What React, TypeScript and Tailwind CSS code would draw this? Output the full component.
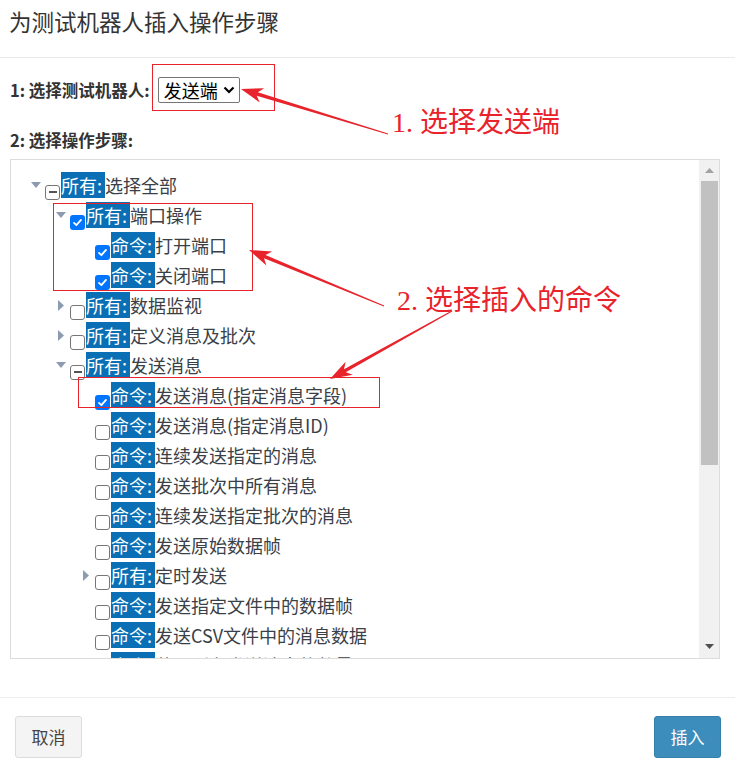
import React from "react";

type Check = "on" | "off" | "mixed";
type Row = { level: 0 | 1 | 2; toggle?: "down" | "right"; check: Check; tag: string; text: string };

const rows: Row[] = [
  { level: 0, toggle: "down", check: "mixed", tag: "所有:", text: "选择全部" },
  { level: 1, toggle: "down", check: "on", tag: "所有:", text: "端口操作" },
  { level: 2, check: "on", tag: "命令:", text: "打开端口" },
  { level: 2, check: "on", tag: "命令:", text: "关闭端口" },
  { level: 1, toggle: "right", check: "off", tag: "所有:", text: "数据监视" },
  { level: 1, toggle: "right", check: "off", tag: "所有:", text: "定义消息及批次" },
  { level: 1, toggle: "down", check: "mixed", tag: "所有:", text: "发送消息" },
  { level: 2, check: "on", tag: "命令:", text: "发送消息(指定消息字段)" },
  { level: 2, check: "off", tag: "命令:", text: "发送消息(指定消息ID)" },
  { level: 2, check: "off", tag: "命令:", text: "连续发送指定的消息" },
  { level: 2, check: "off", tag: "命令:", text: "发送批次中所有消息" },
  { level: 2, check: "off", tag: "命令:", text: "连续发送指定批次的消息" },
  { level: 2, check: "off", tag: "命令:", text: "发送原始数据帧" },
  { level: 2, toggle: "right", check: "off", tag: "所有:", text: "定时发送" },
  { level: 2, check: "off", tag: "命令:", text: "发送指定文件中的数据帧" },
  { level: 2, check: "off", tag: "命令:", text: "发送CSV文件中的消息数据" },
  { level: 2, check: "off", tag: "命令:", text: "获取所有发送消息的数量" },
];

const indent = ["pl-[15px]", "pl-[40px]", "pl-[65px]"];

function Box({ check }: { check: Check }) {
  if (check === "on") {
    return (
      <span className="flex h-[15px] w-[15px] shrink-0 translate-y-[7px] items-center justify-center rounded-[3px] bg-[#0075ff]">
        <svg width="11" height="11" viewBox="0 0 12 12">
          <path d="M2.2 6.4 L4.8 8.9 L9.8 3.2" fill="none" stroke="#fff" strokeWidth="2" strokeLinecap="round" strokeLinejoin="round" />
        </svg>
      </span>
    );
  }
  return (
    <span className="flex h-[15px] w-[15px] shrink-0 translate-y-[7px] items-center justify-center rounded-[3px] border-[1.5px] border-[#767676] bg-white">
      {check === "mixed" && <span className="h-[2px] w-[8px] bg-[#555]" />}
    </span>
  );
}

function Toggle({ dir }: { dir?: "down" | "right" }) {
  return (
    <span className="flex w-[19px] shrink-0 justify-center">
      {dir === "down" && (
        <svg width="10" height="6" viewBox="0 0 10 6">
          <path d="M0 0 H10 L5 6 Z" fill="#8d9bb0" />
        </svg>
      )}
      {dir === "right" && (
        <svg width="6" height="11" viewBox="0 0 6 11">
          <path d="M0 0 L6 5.5 L0 11 Z" fill="#8d9bb0" />
        </svg>
      )}
    </span>
  );
}

// tapered arrow from tail (tx,ty) to tip (px,py)
function arrow(tx: number, ty: number, px: number, py: number) {
  const dx = px - tx;
  const dy = py - ty;
  const len = Math.hypot(dx, dy);
  const ux = dx / len;
  const uy = dy / len;
  const nx = -uy;
  const ny = ux;
  const L = 22;
  const hw = 7.5;
  const bx = px - ux * L;
  const by = py - uy * L;
  const jx = px - ux * (L - 5);
  const jy = py - uy * (L - 5);
  const pts = [
    [tx + nx * 0.5, ty + ny * 0.5],
    [jx + nx * 1.8, jy + ny * 1.8],
    [bx + nx * hw, by + ny * hw],
    [px, py],
    [bx - nx * hw, by - ny * hw],
    [jx - nx * 1.8, jy - ny * 1.8],
    [tx - nx * 0.5, ty - ny * 0.5],
  ];
  return pts.map((p) => `${p[0].toFixed(1)},${p[1].toFixed(1)}`).join(" ");
}

export default function App() {
  return (
    <div className="relative h-[768px] w-full overflow-hidden bg-white font-['Noto_Sans_CJK_SC','Noto_Sans',sans-serif] text-[#333]">
      <div className="h-[58px] border-b border-[#e9e9e9] pl-[9px] pt-[5px]">
        <h1 className="text-[22.5px] leading-[32px] font-normal text-[#333]">为测试机器人插入操作步骤</h1>
      </div>

      <div className="px-[10px] pt-[19px] pr-[15px]">
        <div className="flex h-[26px] items-center">
          <span className="text-[16.5px] font-bold text-[#333]">1: 选择测试机器人:</span>
          <div className="ml-[8px] flex h-[26px] w-[82px] items-center justify-between rounded-[2px] border border-[#767676] bg-white pl-[5px] pr-[4px]">
            <span className="text-[18px] leading-none text-black">发送端</span>
            <svg width="12" height="8" viewBox="0 0 12 8">
              <path d="M1.5 1.5 L6 6 L10.5 1.5" fill="none" stroke="#000" strokeWidth="2.2" />
            </svg>
          </div>
        </div>

        <div className="mt-[26px] flex h-[22px] items-center">
          <span className="text-[16.5px] font-bold text-[#333]">2: 选择操作步骤:</span>
        </div>

        <div className="mt-[8px] flex h-[500px] border border-[#dcdcdc]">
          <div className="flex-1 overflow-hidden pt-[10px]">
            {rows.map((r, i) => (
              <div key={i} className={`flex h-[30px] items-center ${indent[r.level]}`}>
                <Toggle dir={r.toggle} />
                <Box check={r.check} />
                <span className="ml-[1px] whitespace-nowrap text-[18px] leading-[19px]">
                  <span className="bg-[#0a6fb4] pr-[3px] text-white">{r.tag}</span>
                  <span className="text-[#3a3f48]">{r.text}</span>
                </span>
              </div>
            ))}
          </div>
          <div className="flex w-[20px] flex-col bg-[#f1f1f1]">
            <div className="flex h-[21px] items-center justify-center">
              <svg width="9" height="5" viewBox="0 0 9 5">
                <path d="M0 5 L4.5 0 L9 5 Z" fill="#a3a3a3" />
              </svg>
            </div>
            <div className="ml-[2px] mr-[1px] h-[284px] bg-[#c1c1c1]" />
            <div className="flex-1" />
            <div className="flex h-[21px] items-center justify-center pb-[2px]">
              <svg width="9" height="5" viewBox="0 0 9 5">
                <path d="M0 0 L9 0 L4.5 5 Z" fill="#505050" />
              </svg>
            </div>
          </div>
        </div>
      </div>

      <div className="mt-[38px] flex items-start justify-between border-t border-[#ededed] px-[15px] pr-[14px] pt-[18px]">
        <button className="h-[42px] w-[67px] rounded-[3px] border border-[#dcdcdc] bg-[#f4f4f4] text-[17px] text-[#444]">取消</button>
        <button className="h-[42px] w-[67px] rounded-[3px] border border-[#367fa9] bg-[#3c8dbc] text-[17px] text-white">插入</button>
      </div>

      {/* annotations drawn over the dialog */}
      <div className="pointer-events-none absolute left-[152px] top-[64px] h-[47px] w-[123px] border border-[#e8232b]" />
      <div className="pointer-events-none absolute left-[53px] top-[203px] h-[88px] w-[200px] border border-[#e8232b]" />
      <div className="pointer-events-none absolute left-[78px] top-[377px] h-[31px] w-[302px] border border-[#e8232b]" />

      <svg className="pointer-events-none absolute left-0 top-0" width="735" height="768">
        <polygon points={arrow(388, 134, 241, 89)} fill="#e8232b" />
        <polygon points={arrow(384, 306, 249, 250)} fill="#e8232b" />
        <polygon points={arrow(452, 311, 330, 379)} fill="#e8232b" />
      </svg>

      <div className="pointer-events-none absolute left-[392px] top-[106px] font-['Liberation_Serif','Noto_Sans_CJK_SC',serif] text-[28px] leading-[34px] font-normal text-[#e8232b]">
        1. 选择发送端
      </div>
      <div className="pointer-events-none absolute left-[397px] top-[284px] font-['Liberation_Serif','Noto_Sans_CJK_SC',serif] text-[28px] leading-[34px] font-normal text-[#e8232b]">
        2. 选择插入的命令
      </div>
    </div>
  );
}
